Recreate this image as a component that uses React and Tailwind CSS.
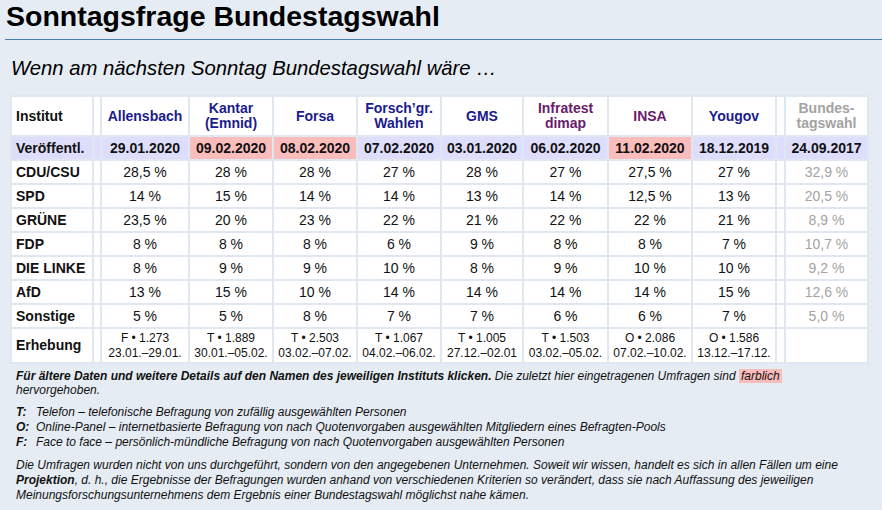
import React from "react";

// Institute der Tabelle, in Spaltenreihenfolge
const institute = [
  { name: "Allensbach", color: "text-[#1b1b8e]", w: "w-[86px]" },
  { name: ["Kantar", "(Emnid)"], color: "text-[#1b1b8e]", w: "w-[82px]" },
  { name: "Forsa", color: "text-[#1b1b8e]", w: "w-[82px]" },
  { name: ["Forsch’gr.", "Wahlen"], color: "text-[#1b1b8e]", w: "w-[82px]" },
  { name: "GMS", color: "text-[#1b1b8e]", w: "w-[80px]" },
  { name: ["Infratest", "dimap"], color: "text-[#6b1a6b]", w: "w-[83px]" },
  { name: "INSA", color: "text-[#6b1a6b]", w: "w-[82px]" },
  { name: "Yougov", color: "text-[#1b1b8e]", w: "w-[82px]" },
];

const dates = [
  { d: "29.01.2020" },
  { d: "09.02.2020", neu: true },
  { d: "08.02.2020", neu: true },
  { d: "07.02.2020" },
  { d: "03.01.2020" },
  { d: "06.02.2020" },
  { d: "11.02.2020", neu: true },
  { d: "18.12.2019" },
];

const parteien = [
  { name: "CDU/CSU", werte: ["28,5 %", "28 %", "28 %", "27 %", "28 %", "27 %", "27,5 %", "27 %"], wahl: "32,9 %" },
  { name: "SPD", werte: ["14 %", "15 %", "14 %", "14 %", "13 %", "14 %", "12,5 %", "13 %"], wahl: "20,5 %" },
  { name: "GRÜNE", werte: ["23,5 %", "20 %", "23 %", "22 %", "21 %", "22 %", "22 %", "21 %"], wahl: "8,9 %" },
  { name: "FDP", werte: ["8 %", "8 %", "8 %", "6 %", "9 %", "8 %", "8 %", "7 %"], wahl: "10,7 %" },
  { name: "DIE LINKE", werte: ["8 %", "9 %", "9 %", "10 %", "8 %", "9 %", "10 %", "10 %"], wahl: "9,2 %" },
  { name: "AfD", werte: ["13 %", "15 %", "10 %", "14 %", "14 %", "14 %", "14 %", "15 %"], wahl: "12,6 %" },
  { name: "Sonstige", werte: ["5 %", "5 %", "8 %", "7 %", "7 %", "6 %", "6 %", "7 %"], wahl: "5,0 %" },
];

const erhebung = [
  ["F • 1.273", "23.01.–29.01."],
  ["T • 1.889", "30.01.–05.02."],
  ["T • 2.503", "03.02.–07.02."],
  ["T • 1.067", "04.02.–06.02."],
  ["T • 1.005", "27.12.–02.01"],
  ["T • 1.503", "03.02.–05.02."],
  ["O • 2.086", "07.02.–10.02."],
  ["O • 1.586", "13.12.–17.12."],
];

const legende = [
  ["T:", "Telefon – telefonische Befragung von zufällig ausgewählten Personen"],
  ["O:", "Online-Panel – internetbasierte Befragung von nach Quotenvorgaben ausgewählten Mitgliedern eines Befragten-Pools"],
  ["F:", "Face to face – persönlich-mündliche Befragung von nach Quotenvorgaben ausgewählten Personen"],
];

const App = () => {
  return (
    <div className="min-h-screen bg-[#e6ecf4] text-[#111] font-['Liberation_Sans',Arial,sans-serif]">
      {/* Titel */}
      <h1 className="pl-[6px] text-[28.5px] font-bold leading-[32px] text-black">
        Sonntagsfrage Bundestagswahl
      </h1>
      <div className="mt-[7px] ml-[5px] h-px bg-[#4a7db5]" />

      <p className="mt-[16px] ml-[11px] text-[20.3px] italic leading-[24px] text-black">
        Wenn am nächsten Sonntag Bundestagswahl wäre …
      </p>

      {/* Tabelle */}
      <table className="mt-[15px] ml-[10px] table-fixed border-separate border-spacing-[2px] bg-[#dfe7f1] text-[14px] leading-[15px]">
        <colgroup>
          <col className="w-[80px]" />
          <col className="w-[6px]" />
          {institute.map((i, k) => (
            <col key={k} className={i.w} />
          ))}
          <col className="w-[7px]" />
          <col className="w-[81px]" />
        </colgroup>
        <thead>
          <tr className="h-[38px] bg-white font-bold">
            <th className="px-[4px] text-left font-bold">Institut</th>
            <th />
            {institute.map((i, k) => (
              <th key={k} className={`px-0 text-center font-bold ${i.color}`}>
                {Array.isArray(i.name) ? (
                  <>
                    {i.name[0]}
                    <br />
                    {i.name[1]}
                  </>
                ) : (
                  i.name
                )}
              </th>
            ))}
            <th />
            <th className="text-center font-bold text-[#a3a3a3]">
              Bundes-
              <br />
              tagswahl
            </th>
          </tr>
        </thead>
        <tbody>
          <tr className="h-[22px] bg-[#dedefc] font-bold">
            <td className="px-[4px]">Veröffentl.</td>
            <td />
            {dates.map((d, k) => (
              <td key={k} className={`text-center ${d.neu ? "bg-[#fbbcbc]" : ""}`}>
                {d.d}
              </td>
            ))}
            <td />
            <td className="text-center">24.09.2017</td>
          </tr>

          {parteien.map((p) => (
            <tr key={p.name} className="h-[22px] bg-white">
              <td className="px-[4px] font-bold">{p.name}</td>
              <td />
              {p.werte.map((w, k) => (
                <td key={k} className="text-center">
                  {w}
                </td>
              ))}
              <td />
              <td className="text-center text-[#a3a3a3]">{p.wahl}</td>
            </tr>
          ))}

          <tr className="h-[33px] bg-white">
            <td className="px-[4px] font-bold">Erhebung</td>
            <td />
            {erhebung.map((e, k) => (
              <td key={k} className="text-center text-[12px] leading-[15px]">
                {e[0]}
                <br />
                {e[1]}
              </td>
            ))}
            <td />
            <td />
          </tr>
        </tbody>
      </table>

      {/* Fußnoten */}
      <div className="mt-[5px] ml-[16px] mr-[20px] text-[12px] italic leading-[14px] text-[#111]">
        <p>
          <b>Für ältere Daten und weitere Details auf den Namen des jeweiligen Instituts klicken.</b>{" "}
          Die zuletzt hier eingetragenen Umfragen sind{" "}
          <span className="bg-[#fbbcbc] px-[2px]">farblich</span> hervorgehoben.
        </p>

        <div className="mt-[8px]">
          {legende.map(([k, t]) => (
            <div key={k} className="flex leading-[15px]">
              <b className="w-[20px] shrink-0">{k}</b>
              <span>{t}</span>
            </div>
          ))}
        </div>

        <p className="mt-[8px] leading-[15px]">
          Die Umfragen wurden nicht von uns durchgeführt, sondern von den angegebenen Unternehmen. Soweit wir wissen,
          handelt es sich in allen Fällen um eine <b>Projektion</b>, d. h., die Ergebnisse der Befragungen wurden anhand
          von verschiedenen Kriterien so verändert, dass sie nach Auffassung des jeweiligen
          Meinungsforschungsunternehmens dem Ergebnis einer Bundestagswahl möglichst nahe kämen.
        </p>
      </div>
    </div>
  );
};

export default App;
